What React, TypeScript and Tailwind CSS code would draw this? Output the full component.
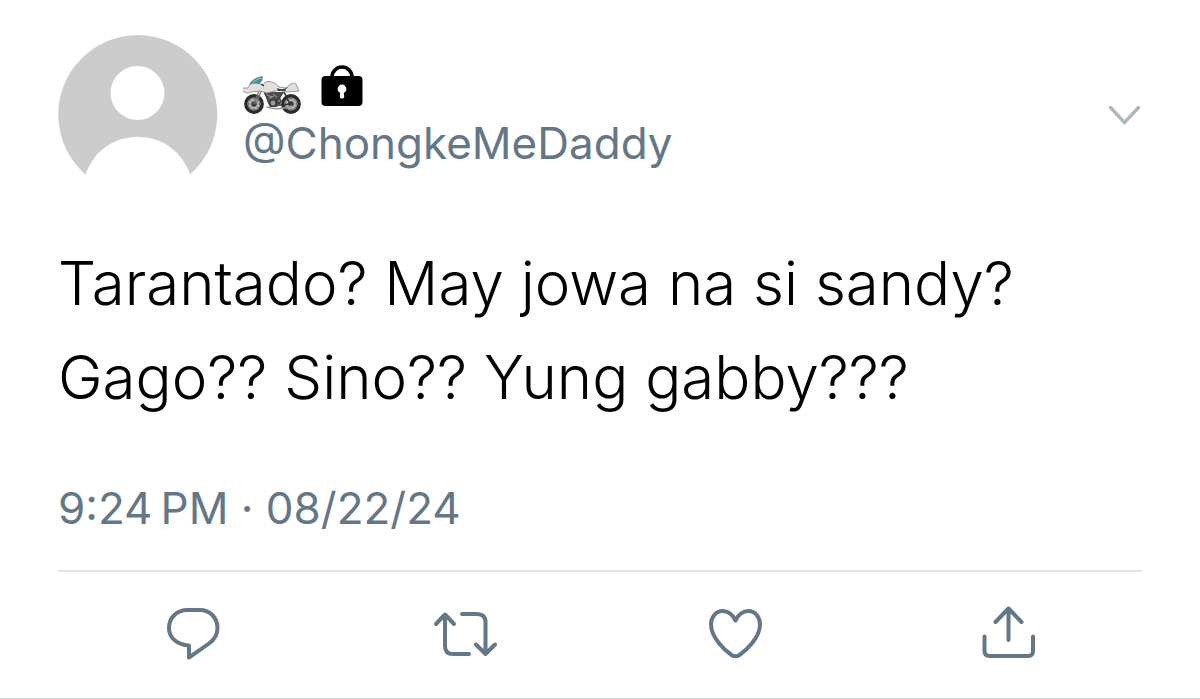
import type { ReactNode } from "react";

interface Tweet {
  handle: string;
  lines: string[];
  time: string;
  date: string;
}

const tweet: Tweet = {
  handle: "@ChongkeMeDaddy",
  lines: ["Tarantado? May jowa na si sandy?", "Gago?? Sino?? Yung gabby???"],
  time: "9:24\u2009PM",
  date: "08/22/24",
};

const Avatar = () => (
  <svg viewBox="0 0 160 140" className="w-40 h-35 shrink-0" role="img" aria-label="Profile picture">
    <path d="M27.5 139.5A79.5 79.5 0 1 1 132 139.5A55 55 0 0 0 27.5 139.5Z" fill="#cccccc" />
    <circle cx="79.5" cy="58" r="27" fill="#fff" />
  </svg>
);

const Motorcycle = () => (
  <svg viewBox="0 0 58 40" className="w-[58px] h-10" fill="none" role="img" aria-label="Motorcycle">
    {/* Wheels */}
    {[11, 48].map((cx) => (
      <g key={cx}>
        <circle cx={cx} cy="29" r="8.2" fill="#c4c4c2" stroke="#2b2b2b" strokeWidth="3.4" />
        <circle cx={cx} cy="29" r="5.6" stroke="#707070" strokeWidth="1" />
        <path
          d={`M${cx - 7} 29h14M${cx} 22v14M${cx - 5} 24l10 10M${cx + 5} 24l-10 10`}
          stroke="#777"
          strokeWidth=".7"
        />
        <circle cx={cx} cy="29" r="2.8" fill="#3d3d3d" />
      </g>
    ))}
    {/* Fork, frame and engine */}
    <path d="M17 13L11 29M19 14l-6 15" stroke="#777" strokeWidth="1.3" />
    <path d="M21 16l6 14h12l8-1M40 17l-8 13M41 17l6 12" stroke="#333" strokeWidth="1.6" />
    <path d="M23 17h17l-3 5 1 6-4 4h-7l-3-6z" fill="#4c4c4c" />
    <path d="M24 20l5 2M26 23l5-2M30 19l4 3" stroke="#b5b5b5" strokeWidth=".8" />
    <circle cx="30" cy="28" r="3.2" fill="#999" stroke="#222" strokeWidth="1" />
    <circle cx="36" cy="26" r="2.2" fill="#777" stroke="#222" strokeWidth="1" />
    <path d="M24 32c5 2 13 3 25-1" stroke="#999" strokeWidth="1.5" strokeLinecap="round" />
    {/* Bodywork */}
    <path
      d="M5 13C6 9 10 8 14 8l6 2c1-4 10-6 16 2l8 1c2-4 6-6 9-4l3 7-12 1-8-2-12 3-7-2-9 1c-3 2-9 1-9-4z"
      fill="#e0e0dd"
      stroke="#858583"
      strokeWidth=".8"
    />
    <path d="M34 13c4 2 8 2 11-2l-3 5h-7z" fill="#404040" />
    <path d="M6 10C9 4 14 2 20 1l-1 5-3 3c-4-1-7-1-10 1z" fill="#4d8c91" />
    <path d="M10 7c3-2 5-3 8-4" stroke="#9fc5c6" strokeWidth="1" />
    <path d="M18 9l3 2" stroke="#333" strokeWidth="1.4" />
  </svg>
);

const Lock = () => (
  <svg viewBox="0 0 42 42" className="w-[42px] h-[42px] mb-2" role="img" aria-label="Protected account">
    <path d="M11 14v-2a10 10 0 0 1 20 0v2" fill="none" stroke="#000" strokeWidth="3.6" />
    <rect x="0.5" y="11" width="41" height="30" rx="4" fill="#000" />
    <circle cx="21" cy="24" r="4.4" fill="#fff" />
    <path d="M19.4 26h3.2l.6 5.4a2.2 2.2 0 0 1-4.4 0z" fill="#fff" />
  </svg>
);

const Action = ({ label, children }: { label: string; children: ReactNode }) => (
  <button type="button" aria-label={label} className="flex justify-center cursor-pointer">
    <svg
      viewBox="0 0 64 56"
      className="w-16 h-14"
      fill="none"
      stroke="currentColor"
      strokeWidth="4"
      strokeLinecap="round"
      strokeLinejoin="round"
    >
      {children}
    </svg>
  </button>
);

export default function App() {
  return (
    <article className="bg-white px-[58px] pt-[35px] border-b border-[#cfd4d6] font-['Inter',sans-serif] text-[#657786]">
      {/* Author */}
      <header className="flex items-start">
        <Avatar />
        <div className="flex-1 pl-[25px] pt-[30px]">
          <div className="flex items-end gap-5">
            <Motorcycle />
            <Lock />
          </div>
          <p className="text-[44px] leading-[56px]">{tweet.handle}</p>
        </div>
        <button type="button" aria-label="More options" className="mt-[68px] cursor-pointer">
          <svg
            viewBox="0 0 34 24"
            className="w-[34px] h-6"
            fill="none"
            stroke="#aab8c2"
            strokeWidth="3.4"
            strokeLinecap="round"
          >
            <path d="M2.5 4.5L16.5 19.5L30.5 4.5" />
          </svg>
        </button>
      </header>

      {/* Body */}
      <div className="mt-[61px] text-[60px] leading-[94px] font-light text-black">
        {tweet.lines.map((line) => (
          <p key={line}>{line}</p>
        ))}
      </div>

      <p className="mt-[56px] text-[44px] leading-[56px]">
        <time>{tweet.time}</time> · <time>{tweet.date}</time>
      </p>

      {/* Actions */}
      <footer className="mt-[34px] border-t-2 border-[#e1e4e6] grid grid-cols-4 pt-[33px] pb-[37px]">
        <Action label="Reply">
          <path d="M27 40.5C15.5 40 7 33 7 23C7 13 14.5 5 25.5 5H38C48 5 55.5 13 55.5 23C55.5 30 52.5 34.5 47 38.5L27 52.5Z" />
        </Action>
        <Action label="Retweet">
          <path d="M3 19L12 9.5L21 19M12 10V41Q12 49 20 49H36" />
          <path d="M29 9H44Q52.5 9 52.5 17V48M43 39.5L52.5 49L62 39.5" />
        </Action>
        <Action label="Like">
          <path d="M31.5 15.5C28.5 9.5 24 6 18.5 6C12 6 7 12 7 19.5C7 33 21.5 46 27.5 50Q31.5 52.5 35.5 50C41.5 46 56 33 56 19.5C56 12 51 6 44.5 6C39 6 34.5 9.5 31.5 15.5Z" />
        </Action>
        <Action label="Share">
          <path d="M33.5 35V3.5M20.5 17L33.5 3.5L46.5 17" />
          <path d="M9.5 31.5V46Q9.5 51 14.5 51H53Q58 51 58 46V31.5" />
        </Action>
      </footer>
    </article>
  );
}
